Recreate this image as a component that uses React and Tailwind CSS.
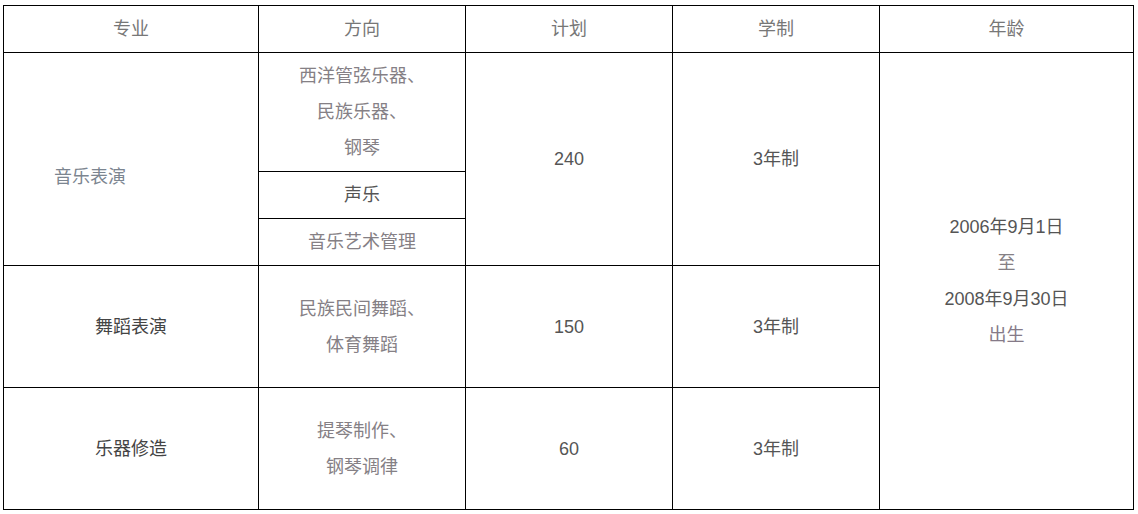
import React from 'react';

const font = { fontFamily: '"Liberation Sans", "Noto Sans CJK SC", sans-serif' };

const cell = 'border border-black p-0 text-center align-middle font-normal';

export default function App() {
  return (
    <div className="bg-white w-[1138px] h-[514px] pt-[5px] pl-[3px]" style={font}>
      <table className="border-collapse table-fixed text-[18px] leading-[36px] text-[#555]">
        <colgroup>
          <col className="w-[255px]" />
          <col className="w-[207px]" />
          <col className="w-[207px]" />
          <col className="w-[207px]" />
          <col className="w-[254px]" />
        </colgroup>
        <thead>
          <tr className="h-[47px] text-[#777]">
            <th className={cell}>专业</th>
            <th className={cell}>方向</th>
            <th className={cell}>计划</th>
            <th className={cell}>学制</th>
            <th className={cell}>年龄</th>
          </tr>
        </thead>
        <tbody>
          <tr className="h-[119px]">
            <td rowSpan={3} className={`${cell} !text-left pl-[50px] pt-[36px] text-[#7c8590]`}>音乐表演</td>
            <td className={`${cell} text-[#858085]`}>
              西洋管弦乐器、<br />民族乐器、<br />钢琴
            </td>
            <td rowSpan={3} className={cell}>240</td>
            <td rowSpan={3} className={cell}>3年制</td>
            <td rowSpan={5} className={cell}>
              2006年9月1日<br />
              <span className="text-[#858085]">至</span><br />
              2008年9月30日<br />
              <span className="text-[#857a88]">出生</span>
            </td>
          </tr>
          <tr className="h-[47px]">
            <td className={`${cell} text-[#555]`}>声乐</td>
          </tr>
          <tr className="h-[47px]">
            <td className={`${cell} text-[#858085]`}>音乐艺术管理</td>
          </tr>
          <tr className="h-[122px]">
            <td className={`${cell} text-[#444]`}>舞蹈表演</td>
            <td className={`${cell} text-[#858085]`}>
              民族民间舞蹈、<br />体育舞蹈
            </td>
            <td className={cell}>150</td>
            <td className={cell}>3年制</td>
          </tr>
          <tr className="h-[122px]">
            <td className={`${cell} text-[#444]`}>乐器修造</td>
            <td className={`${cell} text-[#858085]`}>
              提琴制作、<br />钢琴调律
            </td>
            <td className={cell}>60</td>
            <td className={cell}>3年制</td>
          </tr>
        </tbody>
      </table>
    </div>
  );
}
